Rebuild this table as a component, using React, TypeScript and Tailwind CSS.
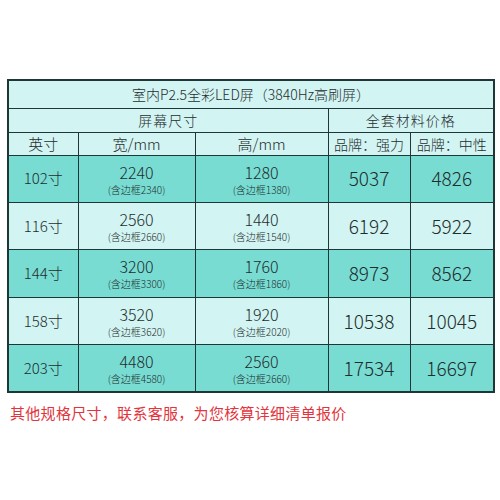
const rows = [
  { size: '102寸', w: '2240', wf: '2340', h: '1280', hf: '1380', a: '5037', b: '4826', dark: true },
  { size: '116寸', w: '2560', wf: '2660', h: '1440', hf: '1540', a: '6192', b: '5922', dark: false },
  { size: '144寸', w: '3200', wf: '3300', h: '1760', hf: '1860', a: '8973', b: '8562', dark: true },
  { size: '158寸', w: '3520', wf: '3620', h: '1920', hf: '2020', a: '10538', b: '10045', dark: false },
  { size: '203寸', w: '4480', wf: '4580', h: '2560', hf: '2660', a: '17534', b: '16697', dark: true },
]

const cell = 'border border-[#1e3636] text-center align-middle p-0 font-light'

export default function App() {
  return (
    <div
      className="w-[500px] h-[500px] bg-white text-[#1f2d2d]"
      style={{ fontFamily: '"Noto Sans CJK SC", "Noto Sans", sans-serif' }}
    >
      <div className="pt-[79px] px-[7px]">
        <table className="w-[486px] table-fixed border-collapse border-2 border-[#1e3636]">
          <colgroup>
            <col className="w-[70px]" />
            <col className="w-[117px]" />
            <col className="w-[133px]" />
            <col className="w-[82px]" />
            <col className="w-[84px]" />
          </colgroup>
          <thead className="bg-[#d2f4f2]">
            <tr className="h-[28px]">
              <th colSpan={5} className={`${cell} text-[14px] leading-none`}>
                室内P2.5全彩LED屏（3840Hz高刷屏）
              </th>
            </tr>
            <tr className="h-[24px]">
              <th colSpan={3} className={`${cell} text-[14px] leading-none tracking-[1px]`}>
                屏幕尺寸
              </th>
              <th colSpan={2} className={`${cell} text-[14px] leading-none tracking-[1px]`}>
                全套材料价格
              </th>
            </tr>
            <tr className="h-[23px]">
              <th className={`${cell} text-[15px] leading-none`}>英寸</th>
              <th className={`${cell} text-[15px] leading-none`}>宽/mm</th>
              <th className={`${cell} text-[15px] leading-none`}>高/mm</th>
              <th className={`${cell} text-[14px] leading-none`}>品牌：强力</th>
              <th className={`${cell} text-[14px] leading-none`}>品牌：中性</th>
            </tr>
          </thead>
          <tbody>
            {rows.map(r => (
              <tr key={r.size} className={`h-[47.4px] ${r.dark ? 'bg-[#78dcd3]' : 'bg-[#d2f4f2]'}`}>
                <td className={`${cell} text-[15px]`}>{r.size}</td>
                <td className={cell}>
                  <div className="text-[16px] leading-[22px]">{r.w}</div>
                  <div className="text-[10px] leading-[14px]">(含边框{r.wf})</div>
                </td>
                <td className={cell}>
                  <div className="text-[16px] leading-[22px]">{r.h}</div>
                  <div className="text-[10px] leading-[14px]">(含边框{r.hf})</div>
                </td>
                <td className={`${cell} text-[19px]`}>{r.a}</td>
                <td className={`${cell} text-[19px]`}>{r.b}</td>
              </tr>
            ))}
          </tbody>
        </table>
        <p className="mt-[10px] pl-[3px] text-[15px] leading-[20px] tracking-[0.3px] text-[#e2343c]">
          其他规格尺寸，联系客服，为您核算详细清单报价
        </p>
      </div>
    </div>
  )
}
